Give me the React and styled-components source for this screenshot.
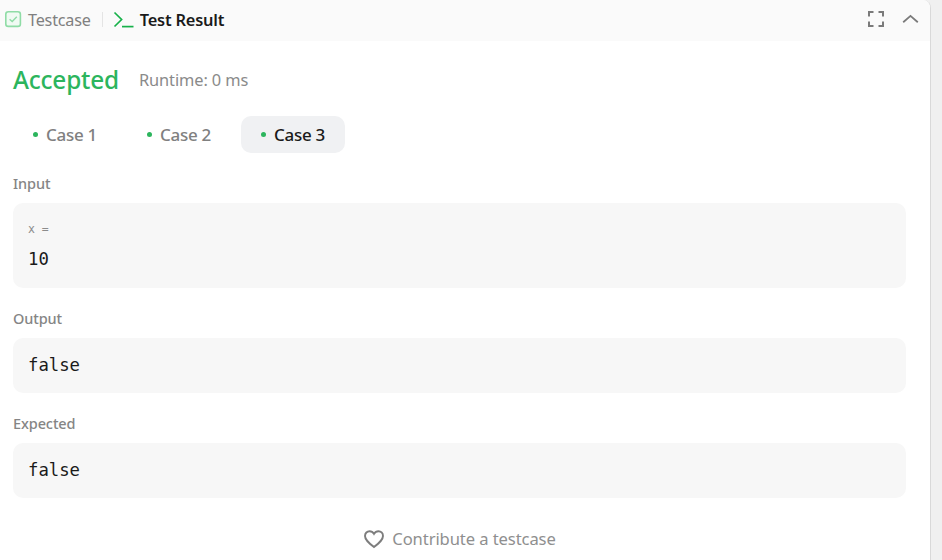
import React from "react";
import styled, { createGlobalStyle } from "styled-components";

const Global = createGlobalStyle`
  html, body { margin: 0; padding: 0; height: 100%; overflow: hidden; background: #f0f0f0; }
  #root { height: 100%; }
  * { box-sizing: border-box; }
`;

const Page = styled.div`
  width: 942px;
  height: 560px;
  display: flex;
  background: #f0f0f0;
  font-family: "Noto Sans", "Open Sans", sans-serif;
`;

const Panel = styled.div`
  width: 931px;
  height: 560px;
  background: #fff;
  border-right: 1px solid #d9d9d9;
  border-top-right-radius: 8px;
  display: flex;
  flex-direction: column;
  overflow: hidden;
`;

const TabBar = styled.div`
  height: 41px;
  flex: none;
  display: flex;
  align-items: center;
  background: #fafafa;
  padding: 0 11px 2px 5px;
`;

const Tab = styled.div`
  display: flex;
  align-items: center;
  gap: ${(p) => p.$gap}px;
  font-size: ${(p) => (p.$active ? 16.4 : 16.2)}px;
  letter-spacing: -0.2px;
  color: ${(p) => (p.$active ? "#1a1a1a" : "#808080")};
  font-weight: ${(p) => (p.$active ? 600 : 400)};
`;

const Divider = styled.div`
  width: 1px;
  height: 15px;
  background: #e4e4e4;
  margin: 0 10px 0 11px;
`;

const Spacer = styled.div`
  flex: 1;
`;

const ToolIcons = styled.div`
  display: flex;
  align-items: center;
  gap: 18px;
`;

const Body = styled.div`
  flex: 1;
  display: flex;
  flex-direction: column;
  padding: 0 24px 0 13px;
`;

const Status = styled.div`
  display: flex;
  align-items: center;
  gap: 20px;
  height: 75px;
  padding-top: 2px;
  flex: none;
`;

const Verdict = styled.span`
  font-size: 24.4px;
  font-weight: 500;
  color: #2cb55d;
  letter-spacing: -0.2px;
`;

const Runtime = styled.span`
  font-size: 16.4px;
  color: #8a8a8a;
  letter-spacing: -0.1px;
`;

const Cases = styled.div`
  display: flex;
  height: 37px;
  flex: none;
`;

const CaseTab = styled.div`
  width: 104px;
  margin-right: ${(p) => p.$mr}px;
  height: 37px;
  border-radius: 10px;
  display: flex;
  align-items: center;
  padding-left: 19.5px;
  gap: 8.5px;
  font-size: 17px;
  font-weight: 500;
  letter-spacing: -0.28px;
  color: ${(p) => (p.$active ? "#1a1a1a" : "#808080")};
  background: ${(p) => (p.$active ? "#f0f1f3" : "transparent")};
`;

const Dot = styled.span`
  width: 5px;
  height: 5px;
  border-radius: 50%;
  background: #2cb55d;
  flex: none;
`;

const Label = styled.div`
  font-size: 14.5px;
  font-weight: 500;
  color: #858585;
  line-height: 18px;
  margin-top: ${(p) => p.$mt}px;
  margin-bottom: 11px;
  letter-spacing: -0.1px;
`;

const ValueBox = styled.div`
  background: #f7f7f7;
  border-radius: 10px;
  padding: ${(p) => (p.$tall ? "18px 15px 15px" : "15px 15px")};
  height: ${(p) => p.$h}px;
  flex: none;
`;

const VarName = styled.div`
  font-family: "DejaVu Sans Mono", monospace;
  font-size: 11.5px;
  line-height: 17px;
  color: #8c8c8c;
`;

const Code = styled.div`
  font-family: "DejaVu Sans Mono", monospace;
  font-size: 17.3px;
  line-height: 24px;
  color: #1a1a1a;
  margin-top: ${(p) => p.$mt || 0}px;
`;

const Footer = styled.div`
  display: flex;
  align-items: center;
  justify-content: center;
  gap: 7px;
  margin-top: 29px;
  font-size: 16.6px;
  letter-spacing: -0.1px;
  color: #8f8f8f;
`;

const CheckIcon = () => (
  <svg width="17" height="17" viewBox="0 0 17 17" fill="none" style={{ flex: "none" }}>
    <rect x="0.8" y="0.8" width="14.6" height="14.6" rx="2.5" fill="#f0faf3" stroke="#8fdca6" strokeWidth="1.6" />
    <path d="M4.6 8.2l2.6 2.4L11.8 5.8" stroke="#8fdca6" strokeWidth="1.4" />
  </svg>
);

const PromptIcon = () => (
  <svg width="21" height="17" viewBox="0 0 21 17" fill="none" style={{ flex: "none" }}>
    <path d="M1.5 1.5L8.6 8.5L1.5 15.5" stroke="#17b14a" strokeWidth="1.7" />
    <path d="M9 15.6H20.5" stroke="#17b14a" strokeWidth="1.7" />
  </svg>
);

const ExpandIcon = () => (
  <svg width="17" height="17" viewBox="0 0 17 17" fill="none" stroke="#7a7a7a" strokeWidth="2">
    <path d="M2 5.5V1H6.5M11.5 1H16V5.5M16 10.5V15H11.5M6.5 15H2V10.5" />
  </svg>
);

const ChevronIcon = () => (
  <svg width="17" height="12" viewBox="0 0 17 12" fill="none" stroke="#7a7a7a" strokeWidth="1.8">
    <path d="M1.2 8.2L8.5 1.9L15.8 8.2" />
  </svg>
);

const HeartIcon = () => (
  <svg width="22" height="22" viewBox="0 0 24 24" fill="none" stroke="#7d7d7d" strokeWidth="2.1">
    <path d="M12 20.8C6 16 2.2 12.8 2.2 8.6C2.2 5.6 4.5 3.6 7.1 3.6C9 3.6 10.9 4.6 12 6.4C13.1 4.6 15 3.6 16.9 3.6C19.5 3.6 21.8 5.6 21.8 8.6C21.8 12.8 18 16 12 20.8Z" />
  </svg>
);

export default function App() {
  return (
    <Page>
      <Global />
      <Panel>
        <TabBar>
          <Tab $gap={6}>
            <CheckIcon />
            Testcase
          </Tab>
          <Divider />
          <Tab $active $gap={6}>
            <PromptIcon />
            Test Result
          </Tab>
          <Spacer />
          <ToolIcons>
            <ExpandIcon />
            <ChevronIcon />
          </ToolIcons>
        </TabBar>
        <Body>
          <Status>
            <Verdict>Accepted</Verdict>
            <Runtime>Runtime: 0 ms</Runtime>
          </Status>
          <Cases>
            <CaseTab $mr={10}><Dot />Case 1</CaseTab>
            <CaseTab $mr={10}><Dot />Case 2</CaseTab>
            <CaseTab $mr={0} $active><Dot />Case 3</CaseTab>
          </Cases>
          <Label $mt={21}>Input</Label>
          <ValueBox $tall $h={85}>
            <VarName>x =</VarName>
            <Code $mt={9}>10</Code>
          </ValueBox>
          <Label $mt={21}>Output</Label>
          <ValueBox $h={55}><Code>false</Code></ValueBox>
          <Label $mt={21}>Expected</Label>
          <ValueBox $h={55}><Code>false</Code></ValueBox>
          <Footer>
            <HeartIcon />
            Contribute a testcase
          </Footer>
        </Body>
      </Panel>
    </Page>
  );
}
